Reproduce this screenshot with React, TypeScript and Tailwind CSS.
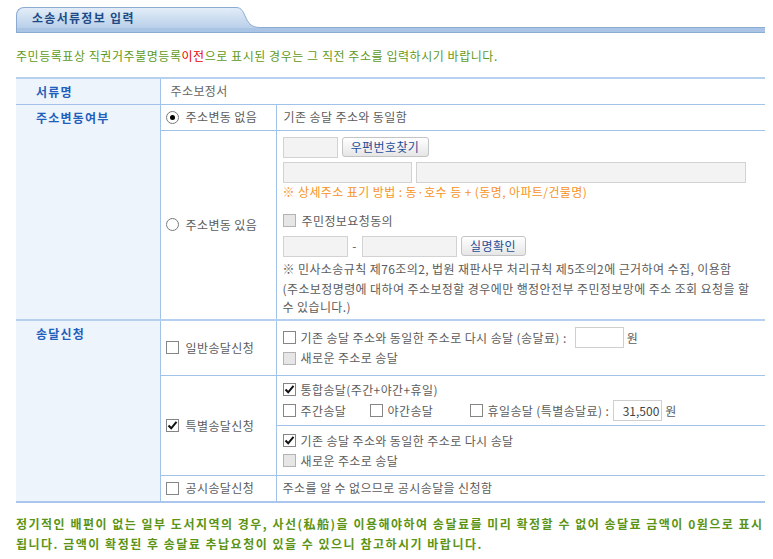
import React from 'react'

function Check({ checked = false, disabled = false }: { checked?: boolean; disabled?: boolean }) {
  return (
    <span
      className={
        'inline-flex items-center justify-center w-[13px] h-[13px] border shrink-0 ' +
        (disabled ? 'bg-[#e6e6e6] border-[#b3b3b3]' : 'bg-white border-[#858585]')
      }
    >
      {checked && (
        <svg width="11" height="11" viewBox="0 0 11 11">
          <path d="M1.5 5.5 L4.2 8.3 L9.5 1.8" fill="none" stroke="#111" strokeWidth="2" />
        </svg>
      )}
    </span>
  )
}

function Radio({ checked = false }: { checked?: boolean }) {
  return (
    <span className="inline-flex items-center justify-center w-[13px] h-[13px] rounded-full border border-[#7a7a7a] bg-white shrink-0">
      {checked && <span className="w-[5px] h-[5px] rounded-full bg-black" />}
    </span>
  )
}

function Field({ w, value = '', white = false }: { w: string; value?: string; white?: boolean }) {
  return (
    <span
      className={
        'inline-flex items-center justify-end h-[21px] border pr-[2px] tracking-normal text-[#444] ' +
        (white ? 'bg-white border-[#cfcfcf] ' : 'bg-[#f3f3f3] border-[#d2d2d2] ') +
        w
      }
    >
      {value}
    </span>
  )
}

function Btn({ children, w }: { children: React.ReactNode; w: string }) {
  return (
    <span
      className={
        'inline-flex items-center justify-center h-[20px] rounded-[3px] border border-[#c4c4c4] bg-gradient-to-b from-white to-[#e6e6e6] text-[#1d4f9a] ' +
        w
      }
    >
      {children}
    </span>
  )
}

const label = 'align-top bg-[#eef4fc] pl-5 pt-[3px] font-bold tracking-[1.2px] text-[#1f60bd] leading-[20px]'

export default function App() {
  return (
    <div className="w-[773px] h-[559px] bg-white font-['Noto_Sans_CJK_KR',sans-serif] text-[12px] tracking-[0.4px] text-[#5c5c5c] pt-[7px] pl-4">
      {/* tab header */}
      <div className="w-[749px]">
        <div className="flex h-[21px]">
          <div className="w-[214px] rounded-tl-[8px] border-t border-l border-[#8cabd3] bg-gradient-to-b from-[#e3edf8] to-[#b9cfe9] pl-[15px] font-bold tracking-[1.3px] text-[#1e4b86] leading-[20px]">
            소송서류정보 입력
          </div>
          <svg width="34" height="21" viewBox="0 0 34 21" className="shrink-0">
            <defs>
              <linearGradient id="tg" x1="0" y1="0" x2="0" y2="1">
                <stop offset="0" stopColor="#e3edf8" />
                <stop offset="1" stopColor="#b9cfe9" />
              </linearGradient>
            </defs>
            <path d="M0 0.5 H6 C12 0.5 13 5 16 11 C19 17 22 20.5 30 20.5 H34 V21 H0 Z" fill="url(#tg)" />
            <path d="M0 0.5 H6 C12 0.5 13 5 16 11 C19 17 22 20.5 30 20.5 H34" fill="none" stroke="#8cabd3" strokeWidth="1" />
          </svg>
          <div className="flex-1 border-b border-[#8cabd3]" />
        </div>
        <div className="h-[5px] bg-[#a9c4e4] border-b border-[#8cabd3] border-l border-l-[#8cabd3]" />
      </div>

      <p className="mt-[13px] leading-[20px] tracking-[0.55px] text-[#5f9a1c]">
        주민등록표상 직권거주불명등록<span className="text-[#e60000]">이전</span>으로 표시된 경우는 그 직전 주소를 입력하시기 바랍니다.
      </p>

      <table className="mt-[11px] w-[749px] table-fixed border-collapse leading-[20px]">
        <colgroup>
          <col className="w-[144px]" />
          <col className="w-[116px]" />
          <col className="w-[489px]" />
        </colgroup>
        <tbody>
          <tr className="h-[26px] border-t-2 border-[#b6d0f0]">
            <td className={label}>서류명</td>
            <td colSpan={2} className="border-l border-[#a3c2ea] pl-[10px] text-[#666]">
              주소보정서
            </td>
          </tr>
          <tr className="h-[26px] border-t border-[#a3c2ea]">
            <td rowSpan={2} className={label}>
              주소변동여부
            </td>
            <td className="border-l border-[#a3c2ea] pl-[5px]">
              <div className="flex items-center gap-[7px]">
                <Radio checked />
                주소변동 없음
              </div>
            </td>
            <td className="border-l border-[#a3c2ea] pl-[7px]">기존 송달 주소와 동일함</td>
          </tr>
          <tr className="border-t border-[#a3c2ea]">
            <td className="border-l border-[#a3c2ea] pl-[5px] align-middle">
              <div className="flex items-center gap-[7px]">
                <Radio />
                주소변동 있음
              </div>
            </td>
            <td className="border-l border-[#a3c2ea] pl-[6px] pt-[6px] pb-[3px] pr-[8px]">
              <div className="flex items-center gap-[4px]">
                <Field w="w-[55px]" />
                <Btn w="w-[87px]">우편번호찾기</Btn>
              </div>
              <div className="flex items-center gap-[4px] mt-[4px]">
                <Field w="w-[129px]" />
                <Field w="w-[330px]" />
              </div>
              <div className="text-[#f7931e] leading-[18px]">※ 상세주소 표기 방법 : 동·호수 등 + (동명, 아파트/건물명)</div>
              <div className="flex items-center gap-[6px] mt-[10px]">
                <Check disabled />
                주민정보요청동의
              </div>
              <div className="flex items-center mt-[5px]">
                <Field w="w-[65px]" />
                <span className="w-[14px] text-center">-</span>
                <Field w="w-[95px]" />
                <span className="ml-[4px]">
                  <Btn w="w-[65px]">실명확인</Btn>
                </span>
              </div>
              <div className="mt-[3px] leading-[18px]">
                ※ 민사소송규칙 제76조의2, 법원 재판사무 처리규칙 제5조의2에 근거하여 수집, 이용함
              </div>
              <div className="mt-[2px] leading-[18px]">
                (주소보정명령에 대하여 주소보정할 경우에만 행정안전부 주민정보망에 주소 조회 요청을 할 수 있습니다.)
              </div>
            </td>
          </tr>

          <tr className="h-[56px] border-t-2 border-[#b6d0f0]">
            <td rowSpan={4} className={label}>
              송달신청
            </td>
            <td className="border-l border-[#a3c2ea] pl-[5px]">
              <div className="flex items-center gap-[7px]">
                <Check />
                일반송달신청
              </div>
            </td>
            <td className="border-l border-[#a3c2ea] pl-[6px]">
              <div className="flex items-center">
                <Check />
                <span className="ml-[5px] mr-[8px]">기존 송달 주소와 동일한 주소로 다시 송달 (송달료) :</span>
                <Field w="w-[49px]" white />
                <span className="ml-[3px]">원</span>
              </div>
              <div className="flex items-center gap-[5px]">
                <Check disabled />
                새로운 주소로 송달
              </div>
            </td>
          </tr>
          <tr className="h-[50px] border-t border-[#a3c2ea]">
            <td rowSpan={2} className="border-l border-[#a3c2ea] pl-[5px]">
              <div className="flex items-center gap-[7px]">
                <Check checked />
                특별송달신청
              </div>
            </td>
            <td className="border-l border-[#a3c2ea] pl-[6px]">
              <div className="flex items-center gap-[5px]">
                <Check checked />
                통합송달(주간+야간+휴일)
              </div>
              <div className="flex items-center h-[22px]">
                <Check />
                <span className="ml-[5px] w-[69px]">주간송달</span>
                <Check />
                <span className="ml-[5px] w-[82px]">야간송달</span>
                <Check />
                <span className="ml-[5px] mr-[4px]">휴일송달 (특별송달료) :</span>
                <Field w="w-[49px]" value="31,500" white />
                <span className="ml-[3px]">원</span>
              </div>
            </td>
          </tr>
          <tr className="h-[50px] border-t border-[#a3c2ea]">
            <td className="border-l border-[#a3c2ea] pl-[6px]">
              <div className="flex items-center gap-[5px]">
                <Check checked />
                기존 송달 주소와 동일한 주소로 다시 송달
              </div>
              <div className="flex items-center gap-[5px]">
                <Check disabled />
                새로운 주소로 송달
              </div>
            </td>
          </tr>
          <tr className="h-[26px] border-t border-[#a3c2ea] border-b-2 border-b-[#a9c7ee]">
            <td className="border-l border-[#a3c2ea] pl-[5px]">
              <div className="flex items-center gap-[7px]">
                <Check />
                공시송달신청
              </div>
            </td>
            <td className="border-l border-[#a3c2ea] pl-[6px]">주소를 알 수 없으므로 공시송달을 신청함</td>
          </tr>
        </tbody>
      </table>

      <p className="mt-[11px] w-[757px] font-bold leading-[20px] tracking-[1.5px] whitespace-nowrap text-[#5b9414]">
        정기적인 배편이 없는 일부 도서지역의 경우, 사선(私船)을 이용해야하여 송달료를 미리 확정할 수 없어 송달료 금액이 0원으로 표시
        <br />
        됩니다. 금액이 확정된 후 송달료 추납요청이 있을 수 있으니 참고하시기 바랍니다.
      </p>
    </div>
  )
}
